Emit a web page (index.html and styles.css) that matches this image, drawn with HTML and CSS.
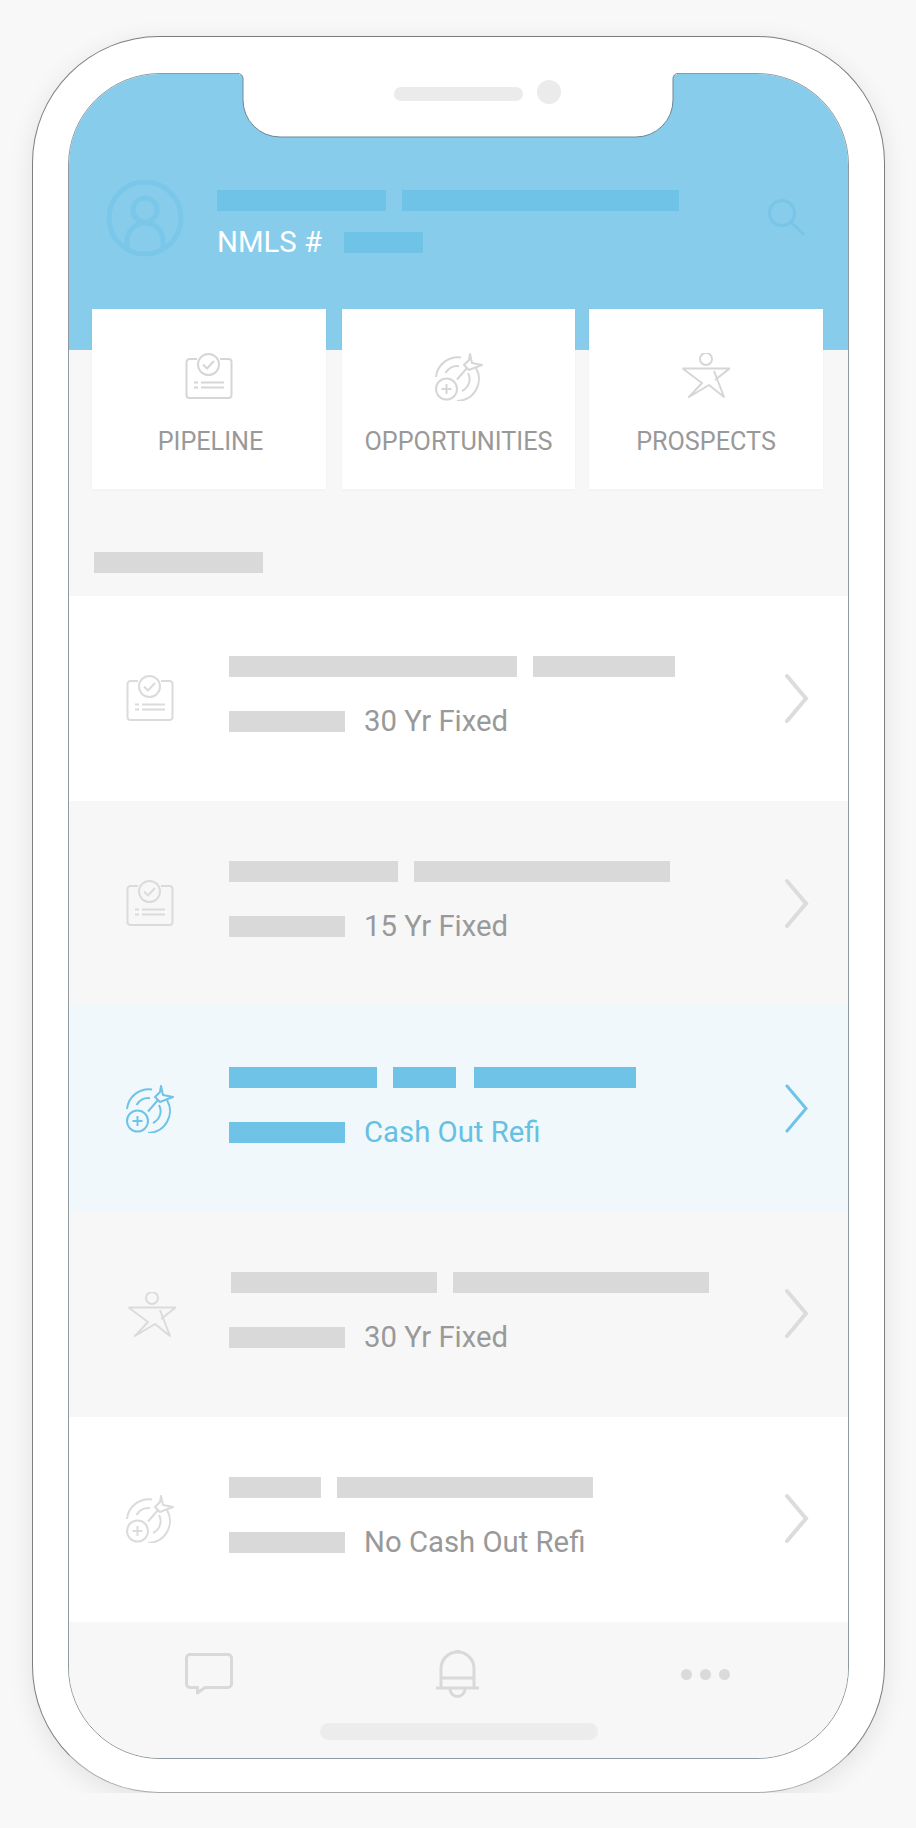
FILE: index.html
```html
<!DOCTYPE html>
<html lang="en">
<head>
    <meta charset="UTF-8">
    <title>Pipeline</title>
    <link rel="stylesheet" href="styles.css">
</head>
<body>
    <svg class="defs" width="0" height="0">
        <symbol id="icon-clipboard" viewBox="0 0 48 48">
            <path d="M12 6H4.5A3 3 0 0 0 1.5 9V42A3 3 0 0 0 4.500 45H43.500A3 3 0 0 0 46.500 42V9A3 3 0 0 0 43.500 6H35"/>
            <circle cx="23.500" cy="11.500" r="10.500"/>
            <path d="M18 11.500L22 15.500L29 8M9 29.500H13M16 29.500H39M9 34.500H13M16 34.500H39"/>
        </symbol>
        <symbol id="icon-target" viewBox="0 0 48 48">
            <path d="M1 24A22 22 0 0 1 26 4.400M41 15A22 22 0 0 1 22 48M10.500 20A13 13 0 0 1 24 13.200M33 20A13 13 0 0 1 27 38"/>
            <circle cx="11.500" cy="36" r="10.500"/>
            <path d="M11.500 31V41M6.500 36H16.500M22 26.500L32 15M35 1L37 10L47 12L39 15L34 17L29 12L34 7Z"/>
        </symbol>
        <symbol id="icon-star" viewBox="0 0 48 48">
            <circle cx="24" cy="6" r="6"/>
            <path d="M.5 15.500H47.500L33 27M.5 15.500L20 30L7 44L27 32L42 44L32 18"/>
        </symbol>
    </svg>

    <div class="phone">
        <svg class="notch" width="446" height="66" viewBox="0 0 446 66">
            <rect class="notch-top" x="4" y="0" width="438" height="2"/>
            <path class="notch-shape" d="M3 .5A5 5 0 0 1 8 5.500V27A37 37 0 0 0 45 64H401A37 37 0 0 0 438 27V5.500A5 5 0 0 1 443 .5"/>
            <rect class="notch-part" x="159" y="14" width="129" height="14" rx="7"/>
            <circle class="notch-part" cx="314" cy="19" r="12"/>
        </svg>

        <div class="screen">
            <header class="header">
                <svg class="avatar" width="78" height="78" viewBox="0 0 78 78">
                    <circle cx="39" cy="39" r="36"/>
                    <circle cx="39" cy="31" r="12"/>
                    <path d="M21 72V62A18 18 0 0 1 57 62V72"/>
                </svg>
                <div class="header-info">
                    <div class="line">
                        <span class="bar bar-blue" style="width: 169px"></span>
                        <span class="bar bar-blue" style="width: 277px"></span>
                    </div>
                    <div class="line nmls">
                        <span class="nmls-label">NMLS #</span>
                        <span class="bar bar-blue" style="width: 79px"></span>
                    </div>
                </div>
                <svg class="search" width="38" height="40" viewBox="0 0 38 40">
                    <circle cx="14" cy="14" r="12.500"/>
                    <path d="M23 23L36 36"/>
                </svg>
            </header>

            <div class="tiles">
                <a class="tile">
                    <svg class="tile-icon"><use href="#icon-clipboard"/></svg>
                    <span>PIPELINE</span>
                </a>
                <a class="tile">
                    <svg class="tile-icon"><use href="#icon-target"/></svg>
                    <span>OPPORTUNITIES</span>
                </a>
                <a class="tile">
                    <svg class="tile-icon"><use href="#icon-star"/></svg>
                    <span>PROSPECTS</span>
                </a>
            </div>

            <div class="section-title"><span class="bar" style="width: 169px"></span></div>

            <div class="rows">
                <div class="row row-white">
                    <svg class="row-icon"><use href="#icon-clipboard"/></svg>
                    <div class="row-body">
                        <div class="line">
                            <span class="bar" style="width: 288px"></span>
                            <span class="bar" style="width: 142px"></span>
                        </div>
                        <div class="line line-sub">
                            <span class="bar" style="width: 116px"></span>
                            <span class="row-text">30 Yr Fixed</span>
                        </div>
                    </div>
                    <svg class="chevron" width="24" height="54" viewBox="0 0 24 54"><path d="M2 4L21 26.500L2 49"/></svg>
                </div>
                <div class="row row-grey">
                    <svg class="row-icon"><use href="#icon-clipboard"/></svg>
                    <div class="row-body">
                        <div class="line">
                            <span class="bar" style="width: 169px"></span>
                            <span class="bar" style="width: 256px"></span>
                        </div>
                        <div class="line line-sub">
                            <span class="bar" style="width: 116px"></span>
                            <span class="row-text">15 Yr Fixed</span>
                        </div>
                    </div>
                    <svg class="chevron" width="24" height="54" viewBox="0 0 24 54"><path d="M2 4L21 26.500L2 49"/></svg>
                </div>
                <div class="row row-active">
                    <svg class="row-icon"><use href="#icon-target"/></svg>
                    <div class="row-body">
                        <div class="line">
                            <span class="bar" style="width: 148px"></span>
                            <span class="bar" style="width: 63px"></span>
                            <span class="bar bar-apart" style="width: 162px"></span>
                        </div>
                        <div class="line line-sub">
                            <span class="bar" style="width: 116px"></span>
                            <span class="row-text">Cash Out Refi</span>
                        </div>
                    </div>
                    <svg class="chevron" width="24" height="54" viewBox="0 0 24 54"><path d="M2 4L21 26.500L2 49"/></svg>
                </div>
                <div class="row row-grey">
                    <svg class="row-icon row-icon-star"><use href="#icon-star"/></svg>
                    <div class="row-body">
                        <div class="line line-shift">
                            <span class="bar" style="width: 206px"></span>
                            <span class="bar" style="width: 256px"></span>
                        </div>
                        <div class="line line-sub">
                            <span class="bar" style="width: 116px"></span>
                            <span class="row-text">30 Yr Fixed</span>
                        </div>
                    </div>
                    <svg class="chevron" width="24" height="54" viewBox="0 0 24 54"><path d="M2 4L21 26.500L2 49"/></svg>
                </div>
                <div class="row row-white">
                    <svg class="row-icon"><use href="#icon-target"/></svg>
                    <div class="row-body">
                        <div class="line">
                            <span class="bar" style="width: 92px"></span>
                            <span class="bar" style="width: 256px"></span>
                        </div>
                        <div class="line line-sub">
                            <span class="bar" style="width: 116px"></span>
                            <span class="row-text">No Cash Out Refi</span>
                        </div>
                    </div>
                    <svg class="chevron" width="24" height="54" viewBox="0 0 24 54"><path d="M2 4L21 26.500L2 49"/></svg>
                </div>
            </div>

            <nav class="tabbar">
                <div class="tabs">
                    <svg class="tab-icon" width="48" height="42" viewBox="0 0 48 42">
                        <path d="M5 1.500H43A3.500 3.500 0 0 1 46.500 5V31A3.500 3.500 0 0 1 43 34.500H20L12.500 40V34.500H5A3.500 3.500 0 0 1 1.500 31V5A3.500 3.500 0 0 1 5 1.500Z"/>
                    </svg>
                    <svg class="tab-icon" width="44" height="50" viewBox="0 0 44 50">
                        <path d="M1 39H44M6 39V19.500A16.500 16.500 0 0 1 39 19.500V39M6 29H39M20 2.500H25M15 40A7.500 7.500 0 0 0 30 40"/>
                    </svg>
                    <div class="dots"><span></span><span></span><span></span></div>
                </div>
                <div class="home-bar"></div>
            </nav>
        </div>
    </div>
</body>
</html>
```

FILE: styles.css
```css
/* Page */
body {
    margin: 0;
    padding: 36px 0 0 32px;
    background-color: #f8f8f8;
    font-family: Roboto, sans-serif;
}

.defs {
    position: absolute;
}

/* Phone frame */
.phone {
    position: relative;
    box-sizing: border-box;
    width: 853px;
    height: 1757px;
    padding: 36px 35px 33px;
    background: white;
    border: 1px solid #7d7d7d;
    border-bottom-color: #a8a8a8;
    border-radius: 127px;
    box-shadow: 0 6px 26px rgba(0, 0, 0, 0.09);
}

.screen {
    box-sizing: border-box;
    display: flex;
    flex-direction: column;
    height: 100%;
    background-color: #f7f7f7;
    border: 1px solid #8e9a9f;
    border-radius: 92px;
    overflow: hidden;
}

.notch {
    position: absolute;
    top: 36px;
    left: 202px;
}

.notch-top {
    fill: white;
}

.notch-shape {
    fill: white;
    stroke: #6d8795;
    stroke-width: 1;
}

.notch-part {
    fill: #ebebeb;
}

/* Blue header */
.header {
    box-sizing: border-box;
    display: flex;
    align-items: flex-start;
    height: 276px;
    padding: 105px 42px 0 37px;
    background-color: #87cceb;
}

.avatar {
    flex: none;
    margin-right: 33px;
    fill: none;
    stroke: #7ac7ea;
    stroke-width: 5;
}

.header-info {
    margin-top: 11px;
}

.search {
    flex: none;
    margin: 20px 0 0 auto;
    fill: none;
    stroke: #79c5e8;
    stroke-width: 3;
}

.line {
    display: flex;
    align-items: center;
    gap: 16px;
}

.nmls {
    margin-top: 21px;
    gap: 22px;
}

.nmls-label {
    width: 105px;
    color: white;
    font-size: 29.3px;
    line-height: 21px;
    white-space: nowrap;
}

/* Bars that stand in for hidden text */
.bar {
    display: block;
    flex: none;
    height: 21px;
    background-color: #d9d9da;
}

.bar-blue {
    background-color: #6fc3e7;
}

.bar-apart {
    margin-left: 2px;
}

/* Tiles */
.tiles {
    display: flex;
    margin-top: -41px;
    padding: 0 25px 0 23px;
}

.tile {
    box-sizing: border-box;
    display: flex;
    flex-direction: column;
    align-items: center;
    width: 234px;
    height: 180px;
    padding-top: 44px;
    background: white;
    color: #999999;
    font-size: 25.2px;
    box-shadow: 0 1px 4px rgba(0, 0, 0, 0.03);
}

.tile:nth-child(2) {
    width: 233px;
    margin: 0 14px 0 16px;
}

.tile:first-child span {
    margin-left: 3px;
}

.tile span {
    margin-top: 26px;
    line-height: 30px;
}

.tile-icon {
    width: 48px;
    height: 48px;
    fill: none;
    stroke: #d6d6d6;
    stroke-width: 2;
    stroke-linejoin: round;
}

.section-title {
    padding: 63px 0 23px 25px;
}

/* List rows */
.rows {
    display: flex;
    flex: 1;
    flex-direction: column;
}

.row {
    display: flex;
    flex: 1;
    align-items: center;
    padding: 0 39px 0 57px;
    color: #999999;
}

.row-white {
    background: white;
}

.row-grey {
    background-color: #f7f7f7;
}

.row-active {
    background-color: #f0f8fc;
    color: #65c0e3;
}

.row-active .bar {
    background-color: #6fc3e7;
}

.row-icon {
    flex: none;
    width: 48px;
    height: 48px;
    margin-right: 55px;
    fill: none;
    stroke: #dbdbdb;
    stroke-width: 2;
    stroke-linejoin: round;
}

.row-active .row-icon {
    stroke: #6fc3e7;
}

.row-icon-star {
    transform: translate(2px, 2px);
}

.row-body {
    flex: 1;
    padding-bottom: 9px;
}

.line-sub {
    margin-top: 34px;
    gap: 19px;
}

.line-shift {
    margin-left: 2px;
}

.row-text {
    font-size: 29.3px;
    line-height: 21px;
}

.chevron {
    flex: none;
    fill: none;
    stroke: #dcdcdc;
    stroke-width: 4;
    stroke-linecap: round;
}

.row-active .chevron {
    stroke: #6fc3e7;
    stroke-width: 3;
}

/* Bottom bar */
.tabbar {
    height: 136px;
    background-color: #f7f7f7;
}

.tabs {
    display: flex;
    align-items: center;
    justify-content: space-between;
    height: 50px;
    padding: 27px 118px 0 116px;
}

.tab-icon {
    flex: none;
    fill: none;
    stroke: #d9d9d9;
    stroke-width: 3;
    stroke-linejoin: round;
}

.dots {
    display: flex;
    gap: 8px;
}

.dots span {
    width: 11px;
    height: 11px;
    background-color: #dadada;
    border-radius: 50%;
}

.home-bar {
    width: 278px;
    height: 17px;
    margin: 24px auto 0;
    background-color: #ececec;
    border-radius: 9px;
}
```
